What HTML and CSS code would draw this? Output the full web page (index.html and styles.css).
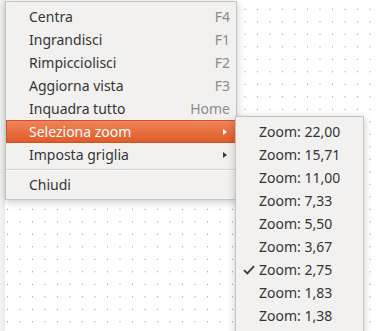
FILE: index.html
```html
<!DOCTYPE html>
<html>
<head>
<meta charset="utf-8">
<link rel="stylesheet" href="styles.css">
</head>
<body>
<div class="canvas">
  <div class="edge"></div>
  <ul class="menu main-menu">
    <li class="item"><span class="label">Centra</span><span class="accel">F4</span></li>
    <li class="item"><span class="label">Ingrandisci</span><span class="accel">F1</span></li>
    <li class="item"><span class="label">Rimpicciolisci</span><span class="accel">F2</span></li>
    <li class="item"><span class="label">Aggiorna vista</span><span class="accel">F3</span></li>
    <li class="item"><span class="label">Inquadra tutto</span><span class="accel">Home</span></li>
    <li class="item active"><span class="label">Seleziona zoom</span><span class="arrow"></span></li>
    <li class="item"><span class="label">Imposta griglia</span><span class="arrow"></span></li>
    <li class="sep"></li>
    <li class="item"><span class="label">Chiudi</span></li>
  </ul>
  <ul class="menu sub-menu">
    <li class="item"><span class="check"></span><span class="label">Zoom: 22,00</span></li>
    <li class="item"><span class="check"></span><span class="label">Zoom: 15,71</span></li>
    <li class="item"><span class="check"></span><span class="label">Zoom: 11,00</span></li>
    <li class="item"><span class="check"></span><span class="label">Zoom: 7,33</span></li>
    <li class="item"><span class="check"></span><span class="label">Zoom: 5,50</span></li>
    <li class="item"><span class="check"></span><span class="label">Zoom: 3,67</span></li>
    <li class="item"><span class="check"><svg width="12" height="10" viewBox="0 0 12 10"><path d="M1 5.2 L4.3 8.4 L11 1.2" fill="none" stroke="#3c3c3c" stroke-width="1.8"/></svg></span><span class="label">Zoom: 2,75</span></li>
    <li class="item"><span class="check"></span><span class="label">Zoom: 1,83</span></li>
    <li class="item"><span class="check"></span><span class="label">Zoom: 1,38</span></li>
  </ul>
</div>
</body>
</html>
```

FILE: styles.css
```css
html, body {
  margin: 0;
  padding: 0;
  width: 378px;
  height: 331px;
  overflow: hidden;
}

body {
  font-family: "Noto Sans", "DejaVu Sans", sans-serif;
  font-size: 14px;
  color: #353535;
}

.canvas {
  position: relative;
  width: 378px;
  height: 331px;
  background-color: #ffffff;
  background-image: radial-gradient(circle, #8a8a8a 0.6px, transparent 0.9px);
  background-size: 12.5px 12.5px;
  background-position: 1.25px 3.05px;
  overflow: hidden;
}

.edge {
  position: absolute;
  left: 0;
  top: 0;
  width: 5px;
  height: 331px;
  background: linear-gradient(to right, #f4f4f4, #ececec);
}

.menu {
  list-style: none;
  margin: 0;
  padding: 3px 0;
  background: #f2f1f0;
  border: 1px solid #c6c3bf;
  box-shadow: 0 2px 8px rgba(0, 0, 0, 0.22);
  box-sizing: border-box;
}

.main-menu {
  position: absolute;
  left: 5px;
  top: 1px;
  width: 232px;
}

.sub-menu {
  position: absolute;
  left: 235px;
  top: 116px;
  width: 129px;
  height: 230px;
  z-index: 2;
}

.item {
  height: 23px;
  display: flex;
  align-items: center;
  white-space: nowrap;
}

.main-menu .item {
  padding: 0 6px 0 23px;
}

.item .label {
  flex: 1;
  line-height: 23px;
}

.accel {
  color: #8c8c8c;
}

.item.active {
  background: linear-gradient(to bottom, #f1865a, #de5a27);
  box-shadow: inset 0 0 0 1px #cd5224;
  color: #ffffff;
}

.arrow {
  width: 0;
  height: 0;
  border-top: 3px solid transparent;
  border-bottom: 3px solid transparent;
  border-left: 4px solid #3c3c3c;
  margin-right: 3px;
}

.active .arrow {
  border-left-color: #ffffff;
}

.sep {
  height: 7px;
  display: flex;
  flex-direction: column;
  justify-content: center;
}

.sep::before {
  content: "";
  display: block;
  height: 1px;
  background: #d6d3cf;
  border-bottom: 1px solid #fbfbfa;
}

.sub-menu .item {
  padding: 0 6px 0 7px;
}

.check {
  width: 16px;
  display: flex;
  align-items: center;
}
```
